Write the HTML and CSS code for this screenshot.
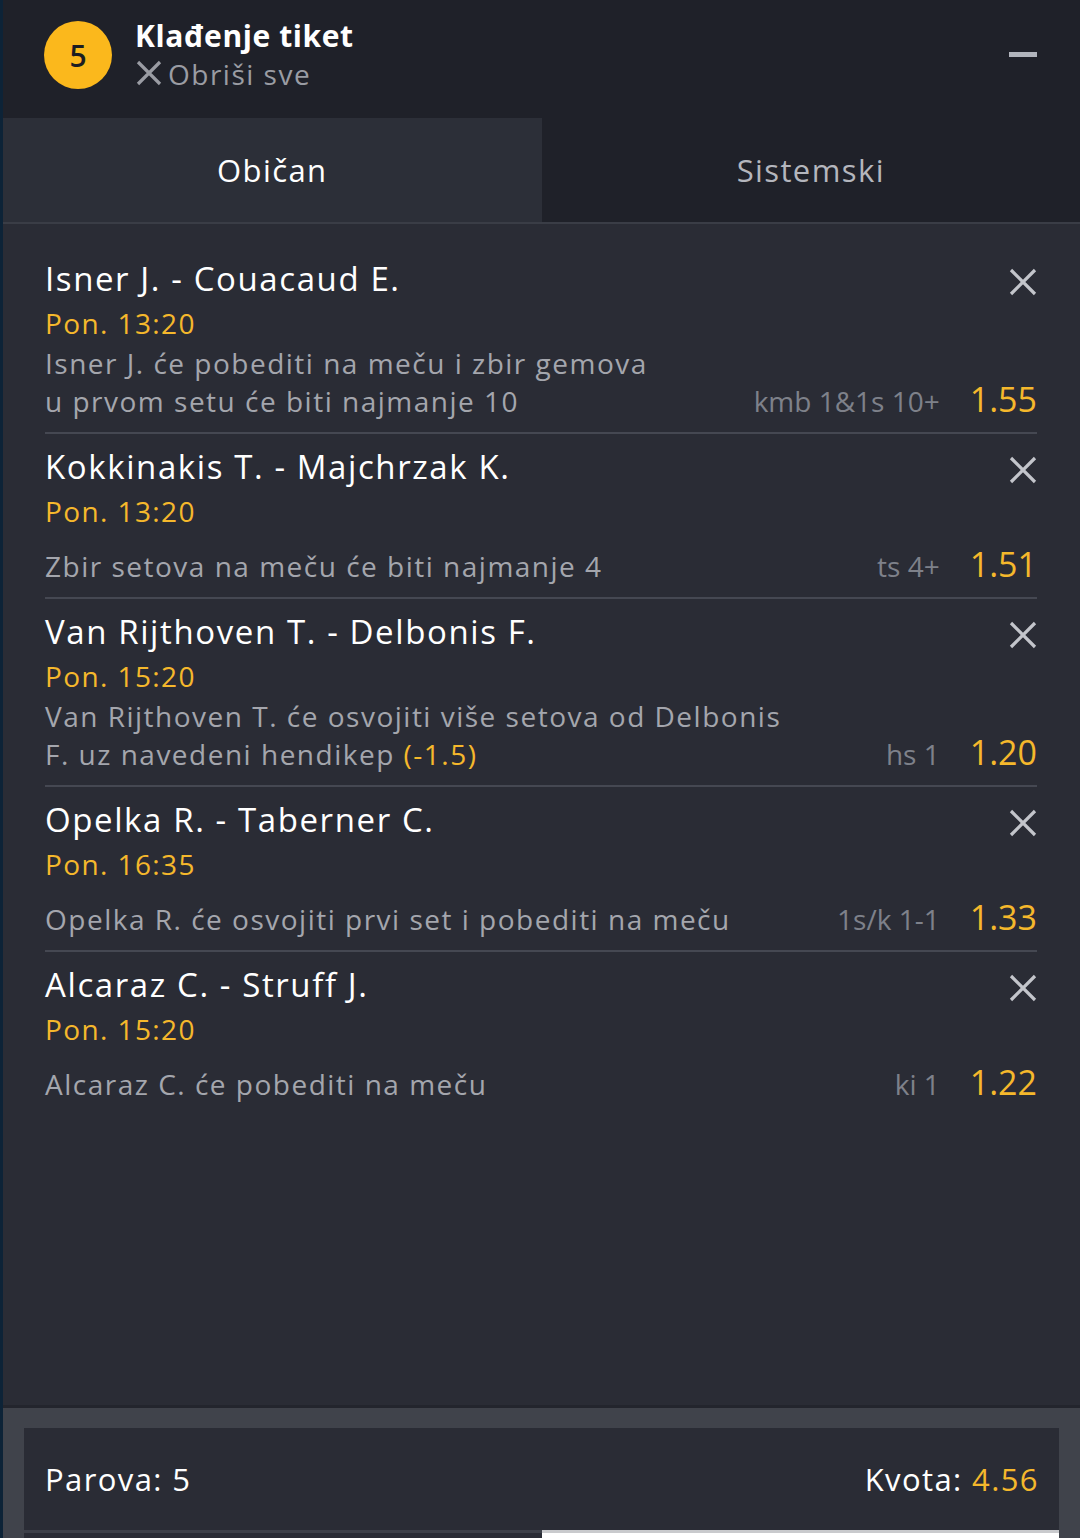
FILE: index.html
```html
<!DOCTYPE html>
<html lang="sr">
<head>
<meta charset="utf-8">
<title>Klađenje tiket</title>
<link rel="stylesheet" href="styles.css">
</head>
<body>
<div class="app">
  <header class="top">
    <div class="badge">5</div>
    <div class="top-text">
      <div class="title">Klađenje tiket</div>
      <div class="clear-all">
        <svg class="clear-x" width="28" height="28" viewBox="0 0 28 28"><path d="M3 3 L25 25 M25 3 L3 25" stroke="#9a9ca3" stroke-width="3.2" fill="none"/></svg>
        <span>Obriši sve</span>
      </div>
    </div>
    <div class="minimize"></div>
  </header>

  <nav class="tabs">
    <div class="tab active">Običan</div>
    <div class="tab">Sistemski</div>
  </nav>

  <main class="list">
    <div class="bet">
      <div class="bet-head"><div class="match">Isner J. - Couacaud E.</div><svg class="close" width="28" height="28" viewBox="0 0 28 28"><path d="M2 2 L26 26 M26 2 L2 26" stroke="#c3c5cb" stroke-width="3.2" fill="none"/></svg></div>
      <div class="time">Pon. 13:20</div>
      <div class="bet-row"><div class="desc">Isner J. će pobediti na meču i zbir gemova u prvom setu će biti najmanje 10</div><div class="code">kmb 1&amp;1s 10+</div><div class="odd">1.55</div></div>
    </div>
    <div class="bet">
      <div class="bet-head"><div class="match">Kokkinakis T. - Majchrzak K.</div><svg class="close" width="28" height="28" viewBox="0 0 28 28"><path d="M2 2 L26 26 M26 2 L2 26" stroke="#c3c5cb" stroke-width="3.2" fill="none"/></svg></div>
      <div class="time">Pon. 13:20</div>
      <div class="bet-row"><div class="desc">Zbir setova na meču će biti najmanje 4</div><div class="code">ts 4+</div><div class="odd">1.51</div></div>
    </div>
    <div class="bet">
      <div class="bet-head"><div class="match">Van Rijthoven T. - Delbonis F.</div><svg class="close" width="28" height="28" viewBox="0 0 28 28"><path d="M2 2 L26 26 M26 2 L2 26" stroke="#c3c5cb" stroke-width="3.2" fill="none"/></svg></div>
      <div class="time">Pon. 15:20</div>
      <div class="bet-row"><div class="desc">Van Rijthoven T. će osvojiti više setova od Delbonis F. uz navedeni hendikep <span class="hl">(-1.5)</span></div><div class="code">hs 1</div><div class="odd">1.20</div></div>
    </div>
    <div class="bet">
      <div class="bet-head"><div class="match">Opelka R. - Taberner C.</div><svg class="close" width="28" height="28" viewBox="0 0 28 28"><path d="M2 2 L26 26 M26 2 L2 26" stroke="#c3c5cb" stroke-width="3.2" fill="none"/></svg></div>
      <div class="time">Pon. 16:35</div>
      <div class="bet-row"><div class="desc">Opelka R. će osvojiti prvi set i pobediti na meču</div><div class="code">1s/k 1-1</div><div class="odd">1.33</div></div>
    </div>
    <div class="bet last">
      <div class="bet-head"><div class="match">Alcaraz C. - Struff J.</div><svg class="close" width="28" height="28" viewBox="0 0 28 28"><path d="M2 2 L26 26 M26 2 L2 26" stroke="#c3c5cb" stroke-width="3.2" fill="none"/></svg></div>
      <div class="time">Pon. 15:20</div>
      <div class="bet-row"><div class="desc">Alcaraz C. će pobediti na meču</div><div class="code">ki 1</div><div class="odd">1.22</div></div>
    </div>
  </main>

  <footer class="foot">
    <div class="summary">
      <div class="pairs">Parova: 5</div>
      <div class="quota">Kvota: <span class="hl">4.56</span></div>
    </div>
    <div class="foot-tabs">
      <div class="ft left"></div>
      <div class="ft right"></div>
    </div>
  </footer>
</div>
</body>
</html>
```

FILE: styles.css
```css
* { box-sizing: border-box; }
html, body { margin: 0; padding: 0; }
body {
  background: #2a2c35;
  font-family: "Open Sans", Lato, sans-serif;
  font-variant-ligatures: none;
  color: #fff;
}
.app {
  width: 1080px;
  height: 1538px;
  display: flex;
  flex-direction: column;
  border-left: 3px solid #0d2337;
  overflow: hidden;
}
.top {
  height: 118px;
  flex: none;
  background: #1f2129;
  display: flex;
  align-items: flex-start;
  padding: 21px 43px 0 41px;
}
.badge {
  width: 68px;
  height: 68px;
  border-radius: 50%;
  background: #fbb81c;
  color: #1c1d22;
  font-size: 30px;
  font-weight: 600;
  display: flex;
  align-items: center;
  justify-content: center;
  flex: none;
}
.top-text {
  margin-left: 23px;
  flex: 1;
  margin-top: -4px;
}
.title {
  font-size: 30px;
  font-weight: 700;
  letter-spacing: 0.6px;
  line-height: 38px;
  color: #fff;
}
.clear-all {
  display: flex;
  align-items: center;
  color: #9a9ca3;
  font-size: 28px;
  letter-spacing: 1.5px;
  line-height: 38px;
}
.clear-x { margin-right: 5px; margin-top: -2px; }
.minimize {
  width: 28px;
  height: 5px;
  background: #b1b4bc;
  margin-top: 31px;
}
.tabs {
  height: 106px;
  flex: none;
  display: flex;
  background: #1f2129;
  border-bottom: 2px solid #3a3d46;
}
.tab {
  flex: 1;
  display: flex;
  align-items: center;
  justify-content: center;
  font-size: 31px;
  letter-spacing: 1.4px;
  color: #b4b6bd;
}
.tab.active {
  background: #2c2f38;
  color: #fff;
}
.list {
  flex: 1;
  padding: 22px 43px 0 42px;
  background: #2a2c35;
}
.bet {
  border-bottom: 2px solid #454852;
  padding-bottom: 12px;
}
.bet.last { border-bottom: none; }
.bet-head {
  display: flex;
  justify-content: space-between;
  align-items: flex-start;
}
.match {
  font-size: 33px;
  letter-spacing: 1.6px;
  line-height: 46px;
  padding-top: 10px;
  color: #fff;
}
.close { margin-top: 22px; }
.time {
  font-size: 28px;
  letter-spacing: 1.4px;
  line-height: 42px;
  color: #f5b82c;
}
.bet-row {
  display: flex;
  align-items: last baseline;
}
.desc {
  flex: 1;
  font-size: 28px;
  letter-spacing: 1.5px;
  line-height: 38px;
  color: #a4a6ad;
  padding-right: 88px;
}
.hl { color: #f5b82c; }
.code {
  font-size: 28px;
  color: #7e818a;
  margin-right: 30px;
  white-space: nowrap;
}
.odd {
  font-size: 34px;
  line-height: 38px;
  padding-top: 13px;
  color: #f5b82c;
}
.foot {
  flex: none;
  background: #40434b;
  border-top: 3px solid #23252d;
  padding: 20px 21px 0 21px;
}
.summary {
  height: 102px;
  background: #2a2c35;
  display: flex;
  justify-content: space-between;
  align-items: center;
  padding: 0 21px;
  font-size: 31px;
  letter-spacing: 1.4px;
  color: #fff;
}
.quota { margin-right: -1px; }
.foot-tabs {
  display: flex;
  height: 8px;
}
.ft { flex: 1; border-top: 3px solid #3d4049; }
.ft.left { background: #2a2c35; }
.ft.right { background: #ffffff; border-top-color: #c9cacd; }
```
